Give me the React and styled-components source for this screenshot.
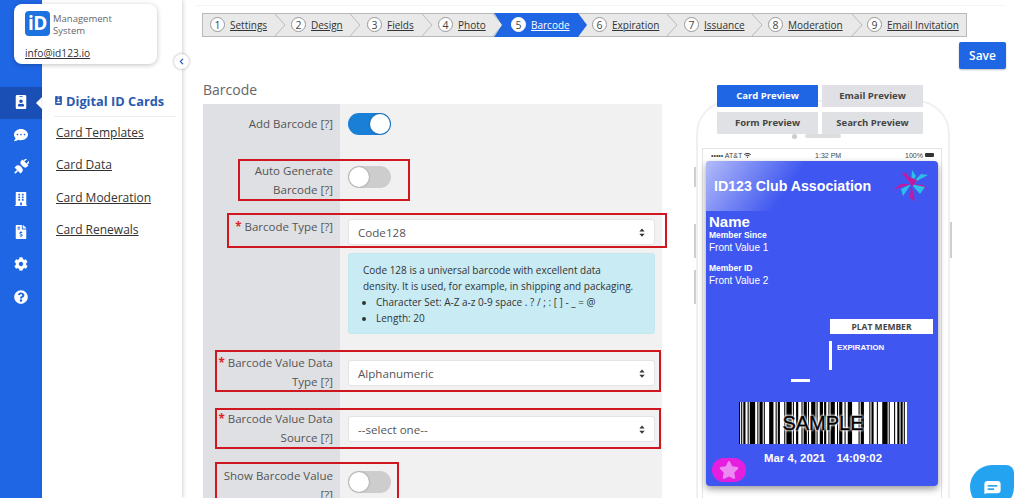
import React from "react";
import styled, { createGlobalStyle } from "styled-components";
import {
  FaIdBadge,
  FaCommentDots,
  FaBuilding,
  FaFileInvoiceDollar,
  FaCog,
  FaQuestionCircle,
  FaChevronLeft,
  FaStar,
  FaWifi,
} from "react-icons/fa";

const GlobalStyle = createGlobalStyle`
  html, body { margin: 0; padding: 0; background: #fff; }
  body { font-family: "Open Sans", "Liberation Sans", sans-serif; }
  * { box-sizing: border-box; }
`;

const PlugIcon = () => (
  <svg width="15" height="15" viewBox="0 0 16 16" fill="#fff">
    <g transform="rotate(45 8 8)">
      <rect x="5" y="-2" width="1.6" height="4" />
      <rect x="9.4" y="-2" width="1.6" height="4" />
      <path d="M3.5 2 H12.5 V4 A4 3 0 0 1 8.8 7 H7.2 A4 3 0 0 1 3.5 4 Z" />
      <path d="M3.5 14 H12.5 V12 A4 3 0 0 0 8.8 8.6 H7.2 A4 3 0 0 0 3.5 12 Z" />
      <rect x="7.1" y="14" width="1.8" height="4" />
    </g>
  </svg>
);

const railIcons = [
  <FaIdBadge size={14} color="#fff" />,
  <FaCommentDots size={14} color="#fff" />,
  <PlugIcon />,
  <FaBuilding size={14} color="#fff" />,
  <FaFileInvoiceDollar size={14} color="#fff" />,
  <FaCog size={14} color="#fff" />,
  <FaQuestionCircle size={14} color="#fff" />,
];
const navLinks = ["Card Templates", "Card Data", "Card Moderation", "Card Renewals"];

const steps = [
  { n: 1, label: "Settings", w: 73, pad: 7 },
  { n: 2, label: "Design", w: 75, pad: 15 },
  { n: 3, label: "Fields", w: 72, pad: 16 },
  { n: 4, label: "Photo", w: 71, pad: 15 },
  { n: 5, label: "Barcode", w: 84, pad: 17, active: true },
  { n: 6, label: "Expiration", w: 90, pad: 14 },
  { n: 7, label: "Issuance", w: 85, pad: 16 },
  { n: 8, label: "Moderation", w: 100, pad: 15 },
  { n: 9, label: "Email Invitation", w: 113, pad: 14, last: true },
];

// bar widths, alternating black / white
const bars = [
  1, 1, 1, 1, 2, 2, 1, 1, 5, 2, 1, 1, 3, 1, 1, 4, 4, 2, 1, 1, 2, 4, 1, 1, 5, 1, 1, 2, 2, 3, 1, 1, 3, 1, 1, 2, 4,
  1, 1, 2, 3, 1, 2, 2, 1, 1, 4, 2, 1, 1, 3, 2, 1, 2, 4, 6, 1, 1, 3, 5, 1, 1, 2, 3, 1, 4, 5, 1, 1, 4, 1, 2, 2, 1,
  2, 1, 1, 2,
];
const barsTotal = bars.reduce((a, b) => a + b, 0);

const Barcode = () => {
  let x = 0;
  return (
    <BarcodeSvg viewBox={`0 0 ${barsTotal} 42`} preserveAspectRatio="none">
      <rect width={barsTotal} height="42" fill="#fff" />
      {bars.map((w, i) => {
        const rect = i % 2 === 0 ? <rect key={i} x={x} width={w} height="42" fill="#000" /> : null;
        x += w;
        return rect;
      })}
    </BarcodeSvg>
  );
};

const Toggle = ({ on }) => (
  <ToggleTrack $on={on}>
    <ToggleKnob $on={on} />
  </ToggleTrack>
);

const Select = ({ value }) => (
  <SelectBox>
    <span>{value}</span>
    <SelectArrows viewBox="0 0 8 12">
      <path d="M4 0.5 L7.5 4.5 H0.5 Z M4 11.5 L7.5 7.5 H0.5 Z" fill="#333" />
    </SelectArrows>
  </SelectBox>
);

const Label = ({ required, pad, children }) => (
  <LabelCell $pad={pad}>
    <LabelText>
      {required && <Star>* </Star>}
      {children}
    </LabelText>
  </LabelCell>
);

export default function App() {
  return (
    <Page>
      <GlobalStyle />
      <Rail>
        {railIcons.map((icon, i) => (
          <RailItem key={i} $active={i === 0}>
            {icon}
          </RailItem>
        ))}
      </Rail>
      <SubNav>
        <NavTitle>
          <FaIdBadge size={9} />
          Digital ID Cards
        </NavTitle>
        {navLinks.map((l) => (
          <NavLink key={l}>{l}</NavLink>
        ))}
        <Collapse>
          <FaChevronLeft size={7} color="#2a5ab0" />
        </Collapse>
      </SubNav>
      <LogoCard>
        <LogoRow>
          <LogoMark>iD</LogoMark>
          <LogoText>
            Management
            <br />
            System
          </LogoText>
        </LogoRow>
        <LogoMail>info@id123.io</LogoMail>
      </LogoCard>

      <Main>
        <TopRule />
        <Stepper>
          {steps.map((s) => (
            <Step key={s.n} $w={s.w} $pad={s.pad} $active={s.active}>
              <StepNum $active={s.active}>{s.n}</StepNum>
              <StepLabel $active={s.active}>{s.label}</StepLabel>
              {!s.active && !s.last && (
                <StepChevron viewBox="0 0 11 22" preserveAspectRatio="none">
                  <polyline points="0,0 10,11 0,22" fill="#e9e9e9" stroke="#b9b9b9" />
                </StepChevron>
              )}
            </Step>
          ))}
        </Stepper>
        <SaveRow>
          <SaveButton>Save</SaveButton>
        </SaveRow>
        <Columns>
          <FormColumn>
            <Heading>Barcode</Heading>
            <FormTable>
              <Row $h={53}>
                <Label pad={11}>Add Barcode [?]</Label>
                <FieldCell $pt={9}>
                  <Toggle on />
                </FieldCell>
              </Row>
              <Row $h={56}>
                <Label pad={5}>
                  Auto Generate
                  <br />
                  Barcode [?]
                </Label>
                <FieldCell $pt={9}>
                  <Toggle />
                </FieldCell>
                <Highlight $left={35} $top={2} $w={172} $h={42} />
              </Row>
              <Row $h={137}>
                <Label required pad={5}>
                  Barcode Type [?]
                </Label>
                <FieldCell $pt={6}>
                  <Select value="Code128" />
                  <InfoBox>
                    Code 128 is a universal barcode with excellent data
                    <br />
                    density. It is used, for example, in shipping and packaging.
                    <InfoList>
                      <li>Character Set: A-Z a-z 0-9 space . ? / ; : [ ] - _ = @</li>
                      <li>Length: 20</li>
                    </InfoList>
                  </InfoBox>
                </FieldCell>
                <Highlight $left={24} $top={0} $w={440} $h={35} />
              </Row>
              <Row $h={58}>
                <Label required pad={4}>
                  Barcode Value Data
                  <br />
                  Type [?]
                </Label>
                <FieldCell $pt={10}>
                  <Select value="Alphanumeric" />
                </FieldCell>
                <Highlight $left={12} $top={0} $w={446} $h={42} />
              </Row>
              <Row $h={54}>
                <Label required pad={2}>
                  Barcode Value Data
                  <br />
                  Source [?]
                </Label>
                <FieldCell $pt={8}>
                  <Select value="--select one--" />
                </FieldCell>
                <Highlight $left={12} $top={0} $w={446} $h={41} />
              </Row>
              <Row $h={40}>
                <Label pad={5}>
                  Show Barcode Value
                  <br />
                  [?]
                </Label>
                <FieldCell $pt={9}>
                  <Toggle />
                </FieldCell>
                <Highlight $left={12} $top={0} $w={184} $h={44} />
              </Row>
            </FormTable>
          </FormColumn>

          <PreviewColumn>
            <Tabs>
              <Tab $active>Card Preview</Tab>
              <Tab>Email Preview</Tab>
              <Tab>Form Preview</Tab>
              <Tab>Search Preview</Tab>
            </Tabs>
            <Phone>
              <SideKey $side="left" $top={65} $h={20} />
              <SideKey $side="left" $top={122} $h={34} />
              <SideKey $side="left" $top={168} $h={34} />
              <SideKey $side="right" $top={120} $h={36} />
              <Camera />
              <Speaker />
              <Screen>
                <StatusBar>
                  <StatusGroup>
                    ••••• AT&amp;T <FaWifi size={7} />
                  </StatusGroup>
                  <span>1:32 PM</span>
                  <StatusGroup>
                    100% <Battery />
                  </StatusGroup>
                </StatusBar>
                <Card>
                  <CardHeader>
                    <CardTitle>ID123 Club Association</CardTitle>
                    <Burst viewBox="0 0 36 32">
                      <polygon points="18,14 8,2 14,4" fill="#c21a9c" />
                      <polygon points="18,14 19,0 23,6" fill="#2cc0e8" />
                      <polygon points="18,14 28,4 35,5" fill="#2cc0e8" />
                      <polygon points="18,14 30,15 35,19" fill="#c21a9c" />
                      <polygon points="18,14 27,24 32,17" fill="#2cc0e8" />
                      <polygon points="18,14 22,31 17,28" fill="#c21a9c" />
                      <polygon points="18,14 10,26 8,19" fill="#2cc0e8" />
                      <polygon points="18,14 0,20 8,14" fill="#c21a9c" />
                      <polygon points="14,6 24,10 19,17" fill="#c21a9c" />
                    </Burst>
                  </CardHeader>
                  <CardBody>
                    <CardName>Name</CardName>
                    <FieldTitle>Member Since</FieldTitle>
                    <FieldValue>Front Value 1</FieldValue>
                    <FieldTitle $gap={8}>Member ID</FieldTitle>
                    <FieldValue>Front Value 2</FieldValue>
                    <PlatBadge>PLAT MEMBER</PlatBadge>
                    <Expiry>EXPIRATION</Expiry>
                    <Dash />
                    <Barcode />
                    <BarcodeCaption>SAMPLE</BarcodeCaption>
                    <CardDate>
                      <span>Mar 4, 2021</span>
                      <span>14:09:02</span>
                    </CardDate>
                  </CardBody>
                  <StarBadge>
                    <FaStar size={20} color="#ea8af2" />
                  </StarBadge>
                </Card>
              </Screen>
            </Phone>
          </PreviewColumn>
        </Columns>
      </Main>

      <ChatButton>
        <svg width="17" height="13" viewBox="0 0 20 16">
          <path d="M4 0 H16 A4 4 0 0 1 20 4 V11 A4 4 0 0 1 16 15 H3 L0 16 V4 A4 4 0 0 1 4 0 Z" fill="#fff" />
          <rect x="4" y="5" width="12" height="2" fill="#23a3f0" />
          <rect x="4" y="9" width="8" height="2" fill="#23a3f0" />
        </svg>
      </ChatButton>
    </Page>
  );
}

const Page = styled.div`
  position: relative;
  display: flex;
  width: 1024px;
  height: 498px;
  overflow: hidden;
  background: #fff;
`;

const Rail = styled.div`
  width: 42px;
  flex-shrink: 0;
  padding-top: 87px;
  background: #1f66e5;
`;
const RailItem = styled.div`
  position: relative;
  display: flex;
  align-items: center;
  justify-content: center;
  height: 32.4px;
  padding-bottom: 2px;
  background: ${(p) => (p.$active ? "#1a4fb5" : "transparent")};
  &::after {
    content: "";
    display: ${(p) => (p.$active ? "block" : "none")};
    position: absolute;
    right: 0;
    top: 10px;
    border: 6px solid transparent;
    border-right-color: #fff;
    border-left-width: 0;
  }
`;

const SubNav = styled.div`
  position: relative;
  width: 140px;
  flex-shrink: 0;
  padding: 93px 6px 0 12px;
  background: #fff;
  box-shadow: 1px 0 4px rgba(0, 0, 0, 0.18);
`;
const NavTitle = styled.div`
  display: flex;
  align-items: center;
  gap: 3px;
  height: 24px;
  padding-bottom: 8px;
  font-size: 12.8px;
  font-weight: 700;
  color: #2a5ab0;
  border-bottom: 1px solid #eee;
`;
const NavLink = styled.a`
  display: block;
  margin: 7px 0 0 2px;
  height: 25.4px;
  line-height: 17px;
  font-size: 12px;
  color: #333;
  text-decoration: underline;
`;
const Collapse = styled.div`
  position: absolute;
  top: 54px;
  right: -7px;
  display: flex;
  align-items: center;
  justify-content: center;
  width: 15px;
  height: 15px;
  border-radius: 50%;
  background: #fff;
  box-shadow: 0 0 3px rgba(0, 0, 0, 0.35);
`;

const LogoCard = styled.div`
  position: absolute;
  left: 14px;
  top: 4px;
  width: 143px;
  height: 60px;
  padding: 7px 11px;
  border-radius: 8px;
  background: #fff;
  box-shadow: 0 1px 5px rgba(0, 0, 0, 0.25);
`;
const LogoRow = styled.div`
  display: flex;
  align-items: center;
  gap: 3px;
`;
const LogoMark = styled.div`
  width: 25px;
  height: 25px;
  border-radius: 4px;
  background: #1a73e0;
  color: #fff;
  font-size: 19px;
  font-weight: 700;
  letter-spacing: -0.5px;
  line-height: 25px;
  text-align: center;
`;
const LogoText = styled.div`
  padding-top: 2px;
  font-size: 9.5px;
  line-height: 11.5px;
  color: #666;
`;
const LogoMail = styled.div`
  margin-top: 10px;
  font-size: 10.2px;
  line-height: 14px;
  color: #333;
  text-decoration: underline;
`;

const Main = styled.div`
  flex: 1;
  min-width: 0;
  padding: 5px 18px 0 20px;
`;
const TopRule = styled.div`
  height: 1px;
  margin: 0 0 7px -7px;
  background: #f5f5f5;
`;

const Stepper = styled.div`
  display: flex;
  width: 765px;
  height: 24px;
  border: 1px solid #b9b9b9;
  background: #e9e9e9;
`;
const Step = styled.div`
  position: relative;
  display: flex;
  align-items: center;
  gap: 5px;
  width: ${(p) => p.$w}px;
  flex-shrink: 0;
  padding-left: ${(p) => p.$pad}px;
  padding-bottom: 1px;
  z-index: ${(p) => (p.$active ? 2 : 1)};
  &::before {
    content: "";
    display: ${(p) => (p.$active ? "block" : "none")};
    position: absolute;
    left: 0;
    top: -1px;
    bottom: -1px;
    right: -9px;
    background: #1f66e5;
    clip-path: polygon(0 0, calc(100% - 9px) 0, 100% 50%, calc(100% - 9px) 100%, 0 100%, 8px 50%);
  }
`;
const StepNum = styled.span`
  position: relative;
  display: flex;
  align-items: center;
  justify-content: center;
  width: 15px;
  height: 15px;
  border-radius: 50%;
  font-size: 10.5px;
  color: #444;
  background: #fff;
  border: 1px solid ${(p) => (p.$active ? "#fff" : "#999")};
`;
const StepLabel = styled.span`
  position: relative;
  font-size: 10px;
  color: ${(p) => (p.$active ? "#fff" : "#333")};
  text-decoration: underline;
  white-space: nowrap;
`;
const StepChevron = styled.svg`
  position: absolute;
  right: -10px;
  top: 0;
  width: 11px;
  height: 22px;
  z-index: 1;
`;

const SaveRow = styled.div`
  display: flex;
  justify-content: flex-end;
  margin-top: 5px;
`;
const SaveButton = styled.button`
  width: 47px;
  height: 27px;
  padding: 0;
  border: 0;
  border-radius: 2px;
  background: #1f66e5;
  box-shadow: 0 1px 2px rgba(0, 0, 0, 0.25);
  color: #fff;
  font-family: inherit;
  font-size: 12px;
  font-weight: 600;
`;

const Columns = styled.div`
  display: flex;
  margin-top: 11px;
`;
const FormColumn = styled.div`
  width: 459px;
  margin-left: 1px;
  flex-shrink: 0;
`;
const Heading = styled.div`
  height: 24px;
  font-size: 14px;
  line-height: 19px;
  color: #666;
`;
const FormTable = styled.div`
  background: #f1f1f1;
`;
const Row = styled.div`
  position: relative;
  display: grid;
  grid-template-columns: 137px 1fr;
  height: ${(p) => p.$h}px;
`;
const LabelCell = styled.div`
  padding: ${(p) => p.$pad}px 7px 0 0;
  background: #dfe0e4;
  text-align: right;
`;
const LabelText = styled.div`
  font-size: 11.5px;
  line-height: 18.5px;
  color: #555;
`;
const Star = styled.span`
  color: #e02020;
  font-weight: 700;
`;
const FieldCell = styled.div`
  padding: ${(p) => p.$pt}px 7px 0 8px;
`;
const Highlight = styled.div`
  position: absolute;
  left: ${(p) => p.$left}px;
  top: ${(p) => p.$top}px;
  width: ${(p) => p.$w}px;
  height: ${(p) => p.$h}px;
  border: 2px solid #d0161f;
  pointer-events: none;
`;

const ToggleTrack = styled.div`
  position: relative;
  width: 43px;
  height: 22px;
  border-radius: 11px;
  background: ${(p) => (p.$on ? "#1a7fd6" : "#cdcdcd")};
`;
const ToggleKnob = styled.div`
  position: absolute;
  top: 1px;
  left: ${(p) => (p.$on ? "22px" : "1px")};
  width: 20px;
  height: 20px;
  border-radius: 50%;
  background: #fff;
  box-shadow: 0 0 2px rgba(0, 0, 0, 0.4);
`;

const SelectBox = styled.div`
  display: flex;
  align-items: center;
  justify-content: space-between;
  height: 26px;
  padding: 0 9px;
  border: 1px solid #e4e4e4;
  border-radius: 3px;
  background: #fff;
  font-size: 11.6px;
  color: #555;
`;
const SelectArrows = styled.svg`
  width: 6px;
  height: 9px;
`;
const InfoBox = styled.div`
  margin-top: 8px;
  height: 81px;
  padding: 8px 8px 8px 14px;
  border-radius: 3px;
  border: 1px solid #c4e7f0;
  background: #c9ebf3;
  font-size: 10px;
  line-height: 16px;
  color: #333;
  white-space: nowrap;
`;
const InfoList = styled.ul`
  margin: 0;
  padding-left: 13px;
`;

const PreviewColumn = styled.div`
  position: relative;
  margin-left: 34px;
  width: 254px;
  flex-shrink: 0;
`;
const Tabs = styled.div`
  position: relative;
  z-index: 2;
  display: grid;
  grid-template-columns: 101px 101px;
  gap: 5px 4px;
  margin: 5px 0 0 21px;
`;
const Tab = styled.div`
  height: 22px;
  border-radius: 1px;
  background: ${(p) => (p.$active ? "#1f66e5" : "#e0e1e5")};
  color: ${(p) => (p.$active ? "#fff" : "#444")};
  font-size: 9.5px;
  font-weight: 700;
  line-height: 22px;
  text-align: center;
`;
const Phone = styled.div`
  position: relative;
  height: 420px;
  margin-top: -34px;
  padding: 46px 6px 0 4px;
  border: 2px solid #f0f0f0;
  border-radius: 34px 34px 0 0;
  background: #fff;
`;
const SideKey = styled.div`
  position: absolute;
  ${(p) => p.$side}: -4px;
  top: ${(p) => p.$top}px;
  width: 2px;
  height: ${(p) => p.$h}px;
  background: #cfcfcf;
`;
const Camera = styled.div`
  position: absolute;
  left: 94px;
  top: 32px;
  width: 5px;
  height: 5px;
  border-radius: 50%;
  background: #ccc;
`;
const Speaker = styled.div`
  position: absolute;
  left: 107px;
  top: 32px;
  width: 36px;
  height: 4px;
  border-radius: 2px;
  background: #ddd;
`;
const Screen = styled.div`
  height: 100%;
  border: 1px solid #e4e4e4;
  border-bottom: 0;
  padding: 0 3px;
`;
const StatusBar = styled.div`
  display: flex;
  justify-content: space-between;
  align-items: center;
  height: 12px;
  padding: 0 4px 0 5px;
  font-family: "Liberation Sans", sans-serif;
  font-size: 7px;
  color: #444;
`;
const StatusGroup = styled.span`
  display: flex;
  align-items: center;
  gap: 2px;
`;
const Battery = styled.span`
  width: 9px;
  height: 4px;
  border-radius: 1px;
  background: #333;
`;
const Card = styled.div`
  position: relative;
  height: 325px;
  border-radius: 4px;
  background: #3f57f0;
  box-shadow: 0 3px 7px rgba(0, 0, 0, 0.4);
  font-family: "Liberation Sans", sans-serif;
  color: #fff;
  overflow: hidden;
`;
const CardHeader = styled.div`
  position: relative;
  display: flex;
  align-items: center;
  justify-content: space-between;
  height: 50px;
  padding: 0 9px 0 8px;
  background: linear-gradient(125deg, rgba(255, 255, 255, 0.6), rgba(255, 255, 255, 0) 38%);
`;
const CardTitle = styled.div`
  font-size: 14.2px;
  font-weight: 700;
`;
const Burst = styled.svg`
  width: 36px;
  height: 32px;
  filter: blur(0.7px);
`;
const CardBody = styled.div`
  padding: 3px 3px 0;
`;
const CardName = styled.div`
  font-size: 15px;
  font-weight: 700;
  line-height: 16px;
`;
const FieldTitle = styled.div`
  margin-top: ${(p) => p.$gap || 0}px;
  font-size: 8.5px;
  font-weight: 700;
  line-height: 10px;
`;
const FieldValue = styled.div`
  margin-top: 1px;
  font-size: 10px;
  line-height: 14px;
`;
const PlatBadge = styled.div`
  width: 103px;
  height: 15px;
  margin: 31px 0 0 121px;
  background: #fff;
  color: #444;
  font-family: "Open Sans", sans-serif;
  font-size: 8.5px;
  font-weight: 700;
  line-height: 15px;
  text-align: center;
`;
const Expiry = styled.div`
  width: 100px;
  height: 29px;
  margin: 7px 0 0 120px;
  padding: 2px 0 0 5px;
  border-left: 3px solid #fff;
  font-size: 7.8px;
  font-weight: 700;
`;
const Dash = styled.div`
  width: 19px;
  height: 3px;
  margin: 9px 0 0 82px;
  background: #fff;
`;
const BarcodeSvg = styled.svg`
  display: block;
  width: 168px;
  height: 42px;
  margin: 20px 0 0 30px;
`;
const BarcodeCaption = styled.div`
  height: 0;
  position: relative;
  top: -32px;
  text-align: center;
  padding-left: 2px;
  color: #000;
  font-size: 20px;
  line-height: 22px;
  -webkit-text-stroke: 0.4px #000;
  text-shadow: 0 0 2px #fff, 0 0 2px #fff, 0 0 3px #fff, 0 0 3px #fff;
`;
const CardDate = styled.div`
  display: flex;
  justify-content: center;
  gap: 11px;
  margin-top: 7px;
  padding-left: 2px;
  font-size: 11.4px;
  font-weight: 700;
  line-height: 14px;
`;
const StarBadge = styled.div`
  position: absolute;
  left: 6px;
  bottom: 4px;
  display: flex;
  align-items: center;
  justify-content: center;
  width: 34px;
  height: 24px;
  border-radius: 12px;
  background: #e61ee0;
`;
const ChatButton = styled.div`
  position: absolute;
  left: 970px;
  top: 465px;
  display: flex;
  align-items: center;
  justify-content: center;
  width: 44px;
  height: 44px;
  border-radius: 50% 8px 50% 50%;
  background: #23a3f0;
`;
